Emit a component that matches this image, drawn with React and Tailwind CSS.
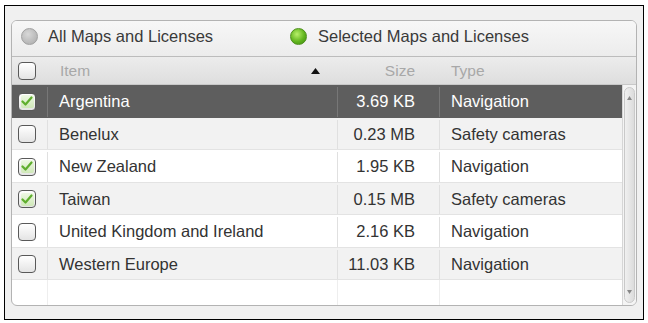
import React from 'react'

const ROWS = [
  { name: 'Argentina', size: '3.69 KB', type: 'Navigation', checked: true, selected: true },
  { name: 'Benelux', size: '0.23 MB', type: 'Safety cameras', checked: false },
  { name: 'New Zealand', size: '1.95 KB', type: 'Navigation', checked: true },
  { name: 'Taiwan', size: '0.15 MB', type: 'Safety cameras', checked: true },
  { name: 'United Kingdom and Ireland', size: '2.16 KB', type: 'Navigation', checked: false },
  { name: 'Western Europe', size: '11.03 KB', type: 'Navigation', checked: false },
]

const Check = ({ checked }) => (
  <div className="w-[18px] h-[18px] rounded-[4px] border-[1.5px] border-[#595959] bg-gradient-to-b from-white to-[#e4e4e4] flex items-center justify-center">
    {checked && (
      <div className="w-[13px] h-[13px] rounded-[2px] bg-gradient-to-b from-[#eef8e4] to-[#cfe8b8] flex items-center justify-center">
        <svg width="12" height="11" viewBox="0 0 12 11" fill="none">
          <path d="M1.5 5.5L4.5 8.5L10.5 1.5" stroke="#5fae2e" strokeWidth="2.2" strokeLinecap="round" strokeLinejoin="round" />
        </svg>
      </div>
    )}
  </div>
)

const Radio = ({ on }) => (
  <div
    className={
      on
        ? 'w-[17px] h-[17px] rounded-full bg-[radial-gradient(circle_at_40%_35%,#b8f06a,#62b51e_55%,#3d8a10)] border border-[#4d8f1c]'
        : 'w-[17px] h-[17px] rounded-full bg-[radial-gradient(circle_at_40%_35%,#d8d8d8,#a9a9a9)] border border-[#a0a0a0]'
    }
  />
)

export default function App() {
  return (
    <div className="w-[648px] h-[323px] bg-white pt-[5px] pl-[4px] font-['Liberation_Sans',Arial,sans-serif]">
      <div className="w-[640px] h-[315px] border border-black bg-[#f0f0f0] pl-[6px] pt-[14px]">
        <div className="w-[626px] h-[286px] rounded-[6px] border border-[#b3b3b3] bg-white overflow-hidden flex flex-col">
          {/* radio header */}
          <div className="h-[36px] shrink-0 flex items-center pb-[5px] bg-gradient-to-b from-[#f7f7f7] to-[#ececec] border-b border-[#bcbcbc] text-[16.5px] text-[#3a3a3a]">
            <div className="pl-[9px] flex items-center gap-[10px] w-[278px]">
              <Radio on={false} />
              <span>All Maps and Licenses</span>
            </div>
            <div className="flex items-center gap-[11px]">
              <Radio on />
              <span>Selected Maps and Licenses</span>
            </div>
          </div>

          {/* column header */}
          <div className="h-[28px] shrink-0 flex items-center bg-gradient-to-b from-[#ececec] to-[#dedede] border-b border-[#c8c8c8] text-[15.5px] text-[#a8a8a8]">
            <div className="w-[36px] flex pl-[6px]">
              <Check checked={false} />
            </div>
            <div className="w-[290px] flex items-center justify-between pl-[12px] pr-[18px]">
              <span>Item</span>
              <svg width="9" height="6" viewBox="0 0 9 6"><path d="M4.5 0L9 6H0Z" fill="#111" /></svg>
            </div>
            <div className="w-[102px] text-right pr-[25px]">Size</div>
            <div className="pl-[11px]">Type</div>
          </div>

          {/* body */}
          <div className="flex-1 flex min-h-0">
            <div className="flex-1 flex flex-col">
              {ROWS.map((r, i) => (
                <div
                  key={r.name}
                  className={
                    'h-[32.5px] shrink-0 flex items-stretch text-[16.5px] border-b pt-[2px] ' +
                    (r.selected
                      ? 'bg-[#5e5e5e] text-white border-[#5e5e5e]'
                      : i % 2 === 1
                      ? 'bg-[#f2f2f2] text-[#333] border-[#e3e3e3]'
                      : 'bg-white text-[#333] border-[#e3e3e3]')
                  }
                >
                  <div className={'w-[36px] flex items-center pl-[6px] border-r ' + (r.selected ? 'border-[#777]' : 'border-[#e0e0e0]')}>
                    <Check checked={r.checked} />
                  </div>
                  <div className={'w-[290px] flex items-center pl-[11px] border-r ' + (r.selected ? 'border-[#777]' : 'border-[#e0e0e0]')}>
                    {r.name}
                  </div>
                  <div className={'w-[102px] flex items-center justify-end pr-[24px] border-r ' + (r.selected ? 'border-[#777]' : 'border-[#e0e0e0]')}>
                    {r.size}
                  </div>
                  <div className="flex-1 flex items-center pl-[11px]">{r.type}</div>
                </div>
              ))}
              <div className="flex-1 flex">
                <div className="w-[36px] border-r border-[#eeeeee]" />
                <div className="w-[290px] border-r border-[#eeeeee]" />
                <div className="w-[102px] border-r border-[#eeeeee]" />
              </div>
            </div>

            {/* scrollbar */}
            <div className="w-[14px] flex flex-col items-center bg-[#f4f4f4] border-l border-[#d6d6d6] py-[2px]">
              <div className="flex-1 w-[11px] rounded-[6px] border border-[#c9c9c9] bg-gradient-to-r from-[#f0f0f0] to-[#dcdcdc] flex flex-col items-center justify-between py-[8px]">
                <svg width="5" height="4" viewBox="0 0 5 4"><path d="M2.5 0L5 4H0Z" fill="#888" /></svg>
                <svg width="5" height="4" viewBox="0 0 5 4"><path d="M0 0H5L2.5 4Z" fill="#888" /></svg>
              </div>
            </div>
          </div>
        </div>
      </div>
    </div>
  )
}
